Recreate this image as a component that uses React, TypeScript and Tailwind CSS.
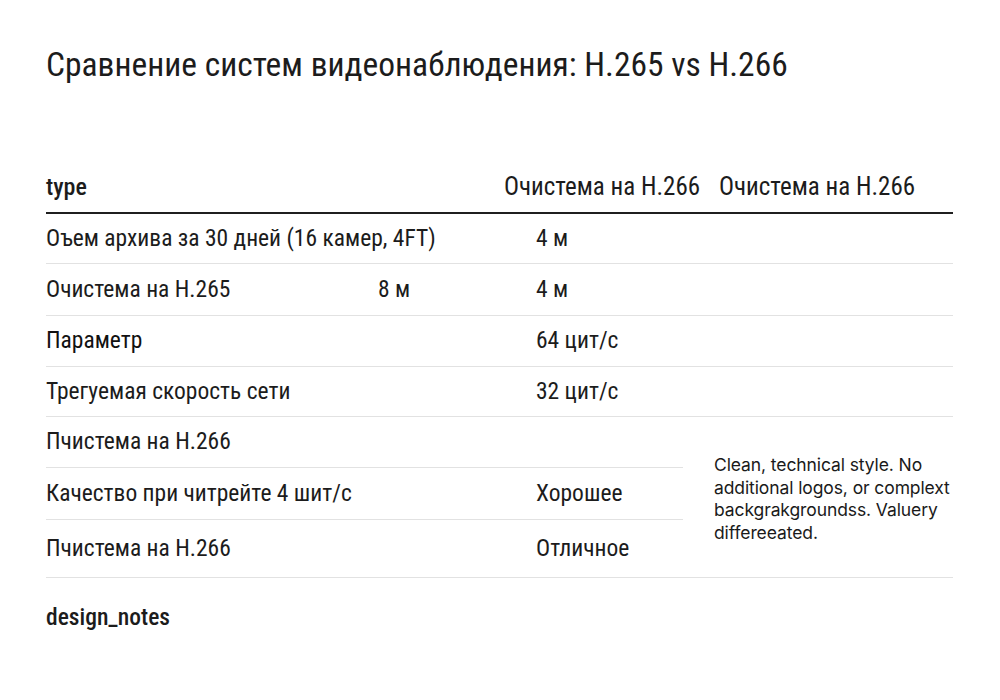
const rows = [
  { label: 'Оъем архива за 30 дней (16 камер, 4FT)', a: '', b: '4 м' },
  { label: 'Очистема на H.265', a: '8 м', b: '4 м' },
  { label: 'Параметр', a: '', b: '64 цит/с', strong: true },
  { label: 'Трегуемая скорость сети', a: '', b: '32 цит/с' },
]

const lowerRows = [
  { label: 'Пчистема на H.266', b: '' },
  { label: 'Качество при читрейте 4 шит/с', b: 'Хорошее' },
  { label: 'Пчистема на H.266', b: 'Отличное' },
]

const heights = ['h-[50px]', 'h-[52px]', 'h-[51px]', 'h-[50px]']

export default function App() {
  return (
    <div className="w-[1000px] h-[700px] bg-white px-[46px] text-[#1c1c1c] font-['Roboto',sans-serif] [font-stretch:87%]">
      {/* Title */}
      <h1 className="pt-[45px] text-[33.5px] leading-[40px] font-normal [font-stretch:85%]">
        Сравнение систем видеонаблюдения: H.265 vs H.266
      </h1>

      {/* Table */}
      <div className="mt-[75px] w-[907px]">
        <div className="flex items-center h-[54px] border-b-2 border-[#1f1f1f] text-[24px] pt-[2px]">
          <div className="w-[458px] font-medium">type</div>
          <div className="w-[215px] text-[25px]">Очистема на H.266</div>
          <div className="text-[25px]">Очистема на H.266</div>
        </div>

        {rows.map((r, i) => (
          <div
            key={i}
            className={`flex items-center ${heights[i]} border-b border-[#e2e2e2] text-[23.5px]`}
          >
            <div className={`w-[332px] whitespace-nowrap ${r.strong ? 'text-[#111]' : ''}`}>{r.label}</div>
            <div className="w-[158px]">{r.a}</div>
            <div>{r.b}</div>
          </div>
        ))}

        {/* Lower block with note */}
        <div className="flex border-b border-[#e2e2e2]">
          <div className="w-[637px] text-[23.5px]">
            {lowerRows.map((r, i) => (
              <div
                key={i}
                className={`flex items-center ${
                  i === 0 ? 'h-[51px] border-b border-[#e2e2e2]' : i === 1 ? 'h-[52px] border-b border-[#e2e2e2]' : 'h-[57px]'
                }`}
              >
                <div className="w-[490px] whitespace-nowrap">{r.label}</div>
                <div>{r.b}</div>
              </div>
            ))}
          </div>
          <div className="flex-1 flex items-center pl-[31px] pt-[4px]">
            <p className="text-[17.5px] leading-[22.5px] text-[#1a1a1a] font-['Inter',sans-serif] [font-stretch:100%] tracking-[-0.1px]">
              Clean, technical style. No additional logos, or complext backgrakgroundss. Valuery differeeated.
            </p>
          </div>
        </div>

        <div className="mt-[22px] text-[23.5px] font-medium">design_notes</div>
      </div>
    </div>
  )
}
